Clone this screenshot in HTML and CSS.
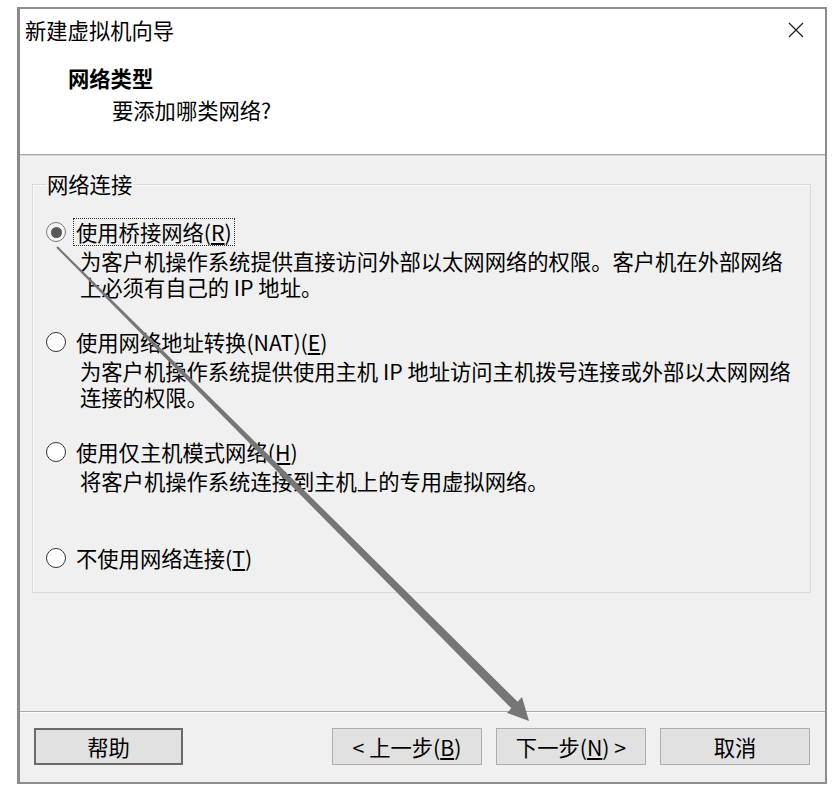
FILE: index.html
```html
<!DOCTYPE html>
<html lang="zh-CN">
<head>
<meta charset="utf-8">
<title>新建虚拟机向导</title>
<link rel="stylesheet" href="styles.css">
</head>
<body>
<div class="page">
  <div class="window">
    <div class="header">
      <div class="titlebar">
        <span class="title">新建虚拟机向导</span>
        <svg class="close" width="16" height="16" viewBox="0 0 16 16"><path d="M1 1 L15 15 M15 1 L1 15" stroke="#222" stroke-width="1.3" fill="none"/></svg>
      </div>
      <div class="h-title">网络类型</div>
      <div class="h-sub">要添加哪类网络?</div>
    </div>
    <div class="sep"></div>
    <div class="content">
      <fieldset class="group">
        <legend class="legend">网络连接</legend>
        <div class="opt">
          <div class="row"><span class="radio checked"><span class="dot"></span></span><span class="label focus">使用桥接网络(<u>R</u>)</span></div>
          <div class="desc">为客户机操作系统提供直接访问外部以太网网络的权限。客户机在外部网络<br>上必须有自己的 IP 地址。</div>
        </div>
        <div class="opt">
          <div class="row"><span class="radio"></span><span class="label">使用网络地址转换(NAT)(<u>E</u>)</span></div>
          <div class="desc">为客户机操作系统提供使用主机 IP 地址访问主机拨号连接或外部以太网网络<br>连接的权限。</div>
        </div>
        <div class="opt">
          <div class="row"><span class="radio"></span><span class="label">使用仅主机模式网络(<u>H</u>)</span></div>
          <div class="desc">将客户机操作系统连接到主机上的专用虚拟网络。</div>
        </div>
        <div class="opt opt-last">
          <div class="row"><span class="radio"></span><span class="label">不使用网络连接(<u>T</u>)</span></div>
        </div>
      </fieldset>
    </div>
    <div class="sep2"></div>
    <div class="footer">
      <button class="btn btn-default">帮助</button>
      <div class="spacer"></div>
      <button class="btn">&lt; 上一步(<u>B</u>)</button>
      <button class="btn">下一步(<u>N</u>) &gt;</button>
      <button class="btn">取消</button>
    </div>
  </div>
  <svg class="arrow" width="839" height="797" viewBox="0 0 839 797">
    <polygon points="56.3,247.7 57.7,246.3 517.7,701.8 522,697 529,721 507,713 511.3,708.2" fill="#767676"/>
  </svg>
</div>
</body>
</html>
```
FILE: styles.css
```css
html, body {
  margin: 0;
  padding: 0;
  background: #ffffff;
}
body {
  font-family: "Noto Sans CJK SC", "Noto Sans", sans-serif;
  font-size: 21.3px;
  color: #000;
}
.page {
  position: relative;
  width: 839px;
  height: 797px;
  overflow: hidden;
}
.window {
  margin-left: 17px;
  margin-top: 7px;
  width: 805px;
  height: 773px;
  border-top: 2px solid #8e8e8e;
  border-right: 2px solid #8e8e8e;
  border-bottom: 2px solid #8e8e8e;
  border-left: 3px solid #8a8a8a;
  display: flex;
  flex-direction: column;
  background: #f0f0f0;
}
.header {
  background: #ffffff;
  height: 145px;
  box-sizing: border-box;
}
.titlebar {
  display: flex;
  align-items: center;
  justify-content: space-between;
  height: 42px;
  padding-left: 5px;
  padding-right: 21px;
}
.title {
  line-height: 42px;
}
.h-title {
  font-weight: bold;
  line-height: 26px;
  margin-top: 14px;
  padding-left: 48px;
}
.h-sub {
  line-height: 26px;
  margin-top: 6px;
  padding-left: 92px;
}
.sep {
  height: 1px;
  background: #a9a9a9;
  border-bottom: 1px solid #d6d6d6;
}
.content {
  flex: 1;
  padding: 15px 14px 0 12px;
}
.group {
  margin: 0;
  min-width: 0;
  border: 1px solid #dadada;
  box-shadow: inset 1px 1px 0 #fafafa;
  padding: 21px 13px 20px 13px;
}
.legend {
  padding: 0 1px;
  line-height: 26px;
  margin-left: 0;
}
.opt + .opt {
  margin-top: 28px;
}
.opt-last {
  margin-top: 50px !important;
}
.row {
  display: flex;
  align-items: center;
  height: 28px;
}
.radio {
  width: 18px;
  height: 18px;
  border: 1.6px solid #333;
  border-radius: 50%;
  background: #fff;
  display: flex;
  align-items: center;
  justify-content: center;
  flex: none;
}
.radio.checked {
  border-color: #7a7a7a;
  background: #f4f4f4;
}
.dot {
  width: 11px;
  height: 11px;
  border-radius: 50%;
  background: #585858;
}
.label {
  margin-left: 7px;
  padding: 0 2px;
  border: 1px solid transparent;
  line-height: 26px;
  white-space: nowrap;
}
.label.focus {
  border: 1px dotted #333;
}
.desc {
  margin-left: 34px;
  margin-top: 2px;
  line-height: 26px;
  white-space: nowrap;
}
.sep2 {
  height: 1px;
  background: #a9a9a9;
  border-bottom: 1px solid #fdfdfd;
}
.footer {
  height: 69px;
  box-sizing: border-box;
  padding: 15px 15px 0 14px;
  display: flex;
  align-items: flex-start;
  gap: 14px;
}
.spacer {
  flex: 1;
}
.btn {
  width: 150px;
  height: 37px;
  font-family: "Noto Sans CJK SC", "Noto Sans", sans-serif;
  font-size: 21.3px;
  color: #000;
  background: #e1e1e1;
  border: 1px solid #adadad;
  padding: 0;
  line-height: 33px;
}
.btn-default {
  width: 149px;
  border: 2px solid #6a6a6a;
}
.arrow {
  position: absolute;
  left: 0;
  top: 0;
  pointer-events: none;
}
```
